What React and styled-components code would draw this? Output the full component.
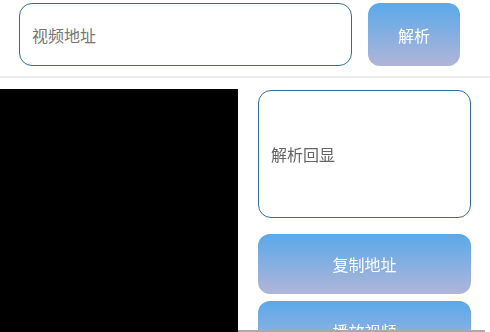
import React from 'react';
import styled, { createGlobalStyle } from 'styled-components';

const GlobalStyle = createGlobalStyle`
  html, body {
    margin: 0;
    padding: 0;
    background: #fff;
    font-family: "Noto Sans CJK SC", "Noto Sans", sans-serif;
  }
`;

const Page = styled.div`
  width: 490px;
  height: 332px;
  overflow: hidden;
  position: relative;
  background: #fff;
`;

const Header = styled.div`
  display: flex;
  align-items: flex-start;
  gap: 16px;
  height: 78px;
  box-sizing: border-box;
  padding: 3px 30px 0 19px;
  border-bottom: 2px solid #ececec;
`;

const UrlInput = styled.input`
  flex: 1;
  height: 63px;
  box-sizing: border-box;
  border: 1.5px solid #2f6f9c;
  border-radius: 13px;
  padding: 0 0 0 12px;
  font-size: 16px;
  font-family: inherit;
  color: #333;
  outline: none;
  caret-color: #222;
  &::placeholder {
    color: #777;
  }
`;

const GradientButton = styled.button`
  width: ${p => p.$width || '100%'};
  height: ${p => p.$height || '60px'};
  flex-shrink: 0;
  border: none;
  border-radius: 12px;
  background: linear-gradient(180deg, #5aa9ea 0%, #b1b5d8 100%);
  color: #fff;
  font-size: 16px;
  font-family: inherit;
  padding: 0;
`;

const Main = styled.div`
  display: flex;
  gap: 20px;
  padding: 11px 19px 0 0;
`;

const Video = styled.div`
  width: 238px;
  height: 260px;
  background: #000;
  flex-shrink: 0;
`;

const Side = styled.div`
  flex: 1;
  display: flex;
  flex-direction: column;
  padding-top: 1px;
`;

const Echo = styled.div`
  height: 128px;
  box-sizing: border-box;
  border: 1.5px solid #2f6f9c;
  border-radius: 13px;
  display: flex;
  align-items: center;
  padding-left: 12px;
  font-size: 16px;
  color: #666;
  margin-bottom: 16px;
`;

const Stack = styled.div`
  display: flex;
  flex-direction: column;
  gap: 7px;
`;

const BottomLine = styled.div`
  position: absolute;
  left: 238px;
  right: 5px;
  bottom: 0;
  height: 2px;
  background: #a9a9a9;
`;

export default function App() {
  return (
    <Page>
      <GlobalStyle />
      <Header>
        <UrlInput placeholder="视频地址" autoFocus />
        <GradientButton $width="92px" $height="63px">解析</GradientButton>
      </Header>
      <Main>
        <Video />
        <Side>
          <Echo>解析回显</Echo>
          <Stack>
            <GradientButton>复制地址</GradientButton>
            <GradientButton>播放视频</GradientButton>
          </Stack>
        </Side>
      </Main>
      <BottomLine />
    </Page>
  );
}
